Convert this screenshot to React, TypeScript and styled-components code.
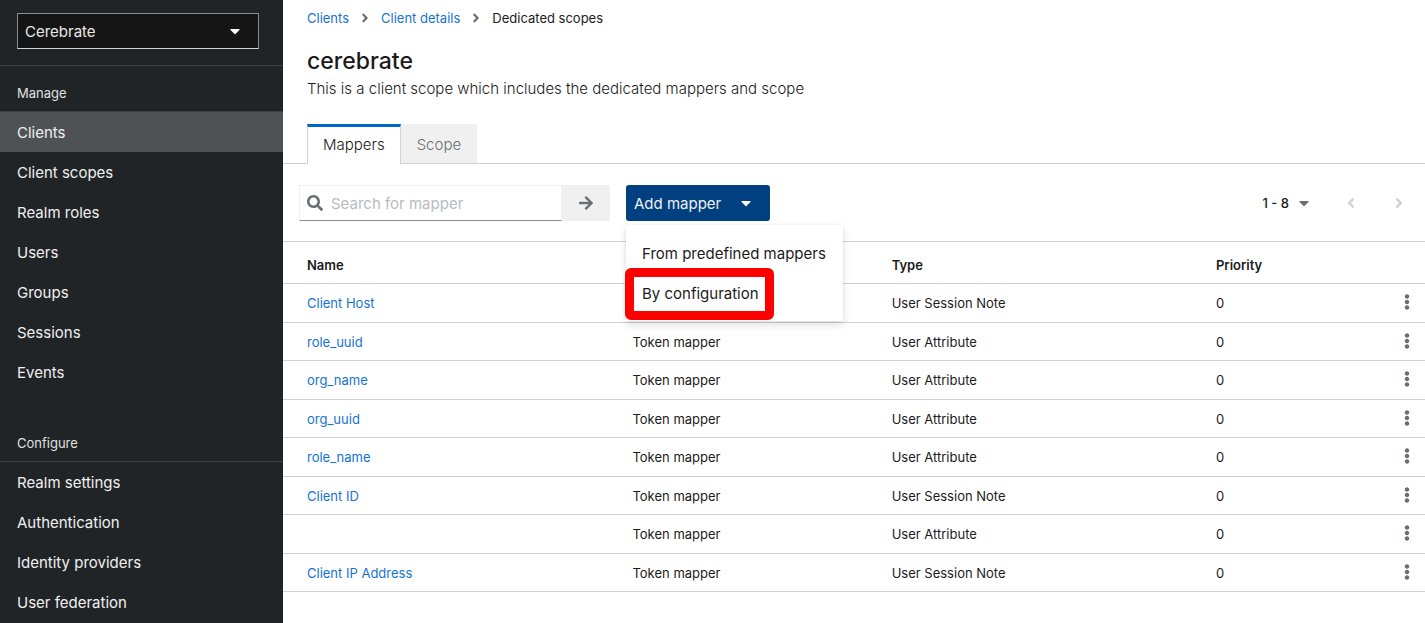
import React from 'react';
import styled, { createGlobalStyle, ThemeProvider } from 'styled-components';
import { FaAngleLeft, FaAngleRight, FaArrowRight, FaCaretDown, FaEllipsisV, FaSearch } from 'react-icons/fa';

const theme = {
  body: '15px',
  small: '13px',
  title: '23px',
  text: '#1b1b1b',
  link: '#1474d4',
  muted: '#6a6e73',
  line: '#d2d2d2',
  grey: '#f0f0f0',
  side: '#212427',
};

const GlobalStyle = createGlobalStyle`
  *, *::before, *::after { box-sizing: border-box; }
  body { margin: 0; background: #fff; }
  body, button, input, select { font-family: Inter, "Liberation Sans", sans-serif; font-weight: 400; }
  a { text-decoration: none; }
`;

const Page = styled.div`
  display: flex;
  min-height: 100vh;
  color: ${(p) => p.theme.text};
  font-size: ${(p) => p.theme.body};
  line-height: 24px;
`;

const Sidebar = styled.aside`
  flex: 0 0 283px;
  background: ${(p) => p.theme.side};
  color: #fff;
`;

const RealmBar = styled.div`
  padding: 13px 24px 16px 17px;
  border-bottom: 1px solid #3c3f42;
`;

const RealmPicker = styled.label`
  display: grid;
  align-items: center;
  > * { grid-area: 1 / 1; }
  > svg { justify-self: end; margin-right: 16px; pointer-events: none; }
`;

const RealmSelect = styled.select`
  appearance: none;
  width: 100%;
  height: 36px;
  padding: 0 7px;
  border: 1px solid #8a8d90;
  border-bottom-color: #d2d2d2;
  border-radius: 0;
  background: #151515;
  color: #e8e8e8;
  font-size: ${(p) => p.theme.body};
`;

const NavSection = styled.section`
  padding-top: 16px;
  & + & { padding-top: 40px; }
`;

const NavTitle = styled.h2`
  margin: 0;
  padding: 0 17px 6px;
  border-bottom: 1px solid #3c3f42;
  color: #e0e0e0;
  font-size: ${(p) => p.theme.small};
  font-weight: 400;
  line-height: 23px;
`;

const NavLink = styled.a<{ $active?: boolean }>`
  display: block;
  padding: 9px 17px 7px;
  background: ${(p) => (p.$active ? '#4f5255' : 'transparent')};
  color: #f0f0f0;
`;

const Main = styled.main`
  flex: 1;
  min-width: 0;
`;

const Header = styled.header`
  padding: 8px 24px 23px;
`;

const Breadcrumb = styled.nav`
  display: flex;
  align-items: center;
  gap: 9px;
  font-size: ${(p) => p.theme.small};
  line-height: 20px;
  > svg { color: ${(p) => p.theme.muted}; }
`;

const TextLink = styled.a`
  color: ${(p) => p.theme.link};
`;

const Title = styled.h1`
  margin: 17px 0 0;
  font-size: ${(p) => p.theme.title};
  font-weight: 500;
  line-height: 32px;
`;

const Description = styled.p`
  margin: 0;
  font-weight: 300;
`;

const Tabs = styled.div`
  display: flex;
  padding: 0 24px;
  box-shadow: inset 0 -1px ${(p) => p.theme.line};
`;

const Tab = styled.button<{ $active?: boolean }>`
  height: 40px;
  padding: ${(p) => (p.$active ? '0 15px 2px' : '1px 16px 0')};
  border: 0 solid ${(p) => p.theme.line};
  border-width: ${(p) => (p.$active ? '3px 1px 0' : '0 0 1px')};
  border-top-color: #06c;
  background: ${(p) => (p.$active ? '#fff' : p.theme.grey)};
  color: ${(p) => (p.$active ? p.theme.text : p.theme.muted)};
  font-size: ${(p) => p.theme.body};
  font-weight: 300;
`;

const Toolbar = styled.div`
  display: flex;
  align-items: center;
  gap: 16px;
  padding: 21px 16px 20px;
`;

const SearchForm = styled.form`
  display: flex;
  width: 311px;
  height: 36px;
`;

const SearchField = styled.label`
  display: flex;
  flex: 1;
  align-items: center;
  gap: 8px;
  min-width: 0;
  padding: 0 7px;
  border: 1px solid ${(p) => p.theme.grey};
  border-bottom-color: #8a8d90;
  color: ${(p) => p.theme.muted};
`;

const SearchInput = styled.input`
  flex: 1;
  min-width: 0;
  padding: 0;
  border: 0;
  outline: 0;
  background: transparent;
  font-size: ${(p) => p.theme.body};
  &::placeholder { color: #b8bbbe; }
`;

const SearchButton = styled.button`
  display: grid;
  place-items: center;
  width: 48px;
  padding: 0;
  border: 0;
  background: ${(p) => p.theme.grey};
  color: ${(p) => p.theme.muted};
  font-size: 16px;
`;

const Dropdown = styled.div`
  position: relative;
`;

const DropdownToggle = styled.button`
  display: flex;
  align-items: center;
  justify-content: space-between;
  width: 144px;
  height: 36px;
  padding: 0 16px 0 8px;
  border: 0;
  border-radius: 3px;
  background: #004080;
  color: #f0f0f0;
  font-size: ${(p) => p.theme.body};
`;

const Menu = styled.div`
  position: absolute;
  top: 100%;
  left: 0;
  z-index: 1;
  width: 217px;
  margin-top: 4px;
  padding: 8px 0;
  background: #fff;
  box-shadow: 0 4px 8px rgba(3, 3, 3, 0.12), 0 0 4px rgba(3, 3, 3, 0.06);
`;

const MenuItem = styled.button`
  position: relative;
  display: block;
  width: 100%;
  height: 40px;
  padding: 0 16px;
  border: 0;
  background: transparent;
  color: ${(p) => p.theme.text};
  font-size: ${(p) => p.theme.body};
  text-align: left;
  white-space: nowrap;
`;

const Highlight = styled.span`
  position: absolute;
  top: -5px;
  left: -1px;
  width: 149px;
  height: 52px;
  border: 9px solid #f00;
  border-radius: 6px;
`;

const Pagination = styled.div`
  display: flex;
  align-items: center;
  margin-left: auto;
`;

const PageRange = styled.button`
  display: flex;
  align-items: center;
  gap: 7px;
  padding: 0 15px 0 0;
  border: 0;
  background: transparent;
  color: ${(p) => p.theme.text};
  font-size: ${(p) => p.theme.small};
  font-weight: 500;
  > svg { color: ${(p) => p.theme.muted}; font-size: 16px; }
`;

const PageButton = styled.button`
  display: grid;
  place-items: center;
  width: 48px;
  height: 36px;
  padding: 0;
  border: 0;
  background: transparent;
  color: ${(p) => p.theme.line};
  font-size: 16px;
  &:last-child { margin-right: -14px; }
`;

const Table = styled.table`
  width: 100%;
  border-collapse: separate;
  border-spacing: 0;
  border-top: 1px solid ${(p) => p.theme.line};
  table-layout: fixed;
  font-size: ${(p) => p.theme.small};
  line-height: 20px;
  text-align: left;
`;

const Col = styled.col<{ $width: string }>`
  width: ${(p) => p.$width};
`;

const HeadCell = styled.th`
  height: 42px;
  padding: 5px 8px 0;
  border-bottom: 1px solid ${(p) => p.theme.line};
  font-weight: 600;
  &:first-child { padding-left: 24px; }
`;

const Cell = styled.td`
  padding: 0 8px;
  border-bottom: 1px solid ${(p) => p.theme.line};
  &:first-child { padding-left: 24px; }
  &:last-child { padding: 0 10px 2px 0; }
`;

const Row = styled.tr`
  height: 38px;
  &:nth-child(odd) { height: 39px; }
`;

const KebabButton = styled.button`
  display: block;
  margin-left: auto;
  padding: 0;
  border: 0;
  background: transparent;
  color: ${(p) => p.theme.muted};
  font-size: 16px;
  line-height: 16px;
  > svg { display: block; }
`;

const manage = ['Clients', 'Client scopes', 'Realm roles', 'Users', 'Groups', 'Sessions', 'Events'];
const configure = ['Realm settings', 'Authentication', 'Identity providers', 'User federation'];

const mappers = [
  { name: 'Client Host', category: '', type: 'User Session Note' },
  { name: 'role_uuid', category: 'Token mapper', type: 'User Attribute' },
  { name: 'org_name', category: 'Token mapper', type: 'User Attribute' },
  { name: 'org_uuid', category: 'Token mapper', type: 'User Attribute' },
  { name: 'role_name', category: 'Token mapper', type: 'User Attribute' },
  { name: 'Client ID', category: 'Token mapper', type: 'User Session Note' },
  { name: '', category: 'Token mapper', type: 'User Attribute' },
  { name: 'Client IP Address', category: 'Token mapper', type: 'User Session Note' },
];

export default function App() {
  return (
    <ThemeProvider theme={theme}>
      <GlobalStyle />
      <Page>
        <Sidebar>
          <RealmBar>
            <RealmPicker>
              <RealmSelect aria-label="Realm" defaultValue="Cerebrate">
                <option>Cerebrate</option>
              </RealmSelect>
              <FaCaretDown size={16} />
            </RealmPicker>
          </RealmBar>
          <nav>
            <NavSection>
              <NavTitle>Manage</NavTitle>
              {manage.map((item) => (
                <NavLink key={item} href="#" $active={item === 'Clients'}>{item}</NavLink>
              ))}
            </NavSection>
            <NavSection>
              <NavTitle>Configure</NavTitle>
              {configure.map((item) => (
                <NavLink key={item} href="#">{item}</NavLink>
              ))}
            </NavSection>
          </nav>
        </Sidebar>
        <Main>
          <Header>
            <Breadcrumb aria-label="Breadcrumb">
              <TextLink href="#">Clients</TextLink>
              <FaAngleRight size={14} />
              <TextLink href="#">Client details</TextLink>
              <FaAngleRight size={14} />
              <span>Dedicated scopes</span>
            </Breadcrumb>
            <Title>cerebrate</Title>
            <Description>This is a client scope which includes the dedicated mappers and scope</Description>
          </Header>
          <Tabs role="tablist">
            <Tab role="tab" aria-selected="true" $active>Mappers</Tab>
            <Tab role="tab" aria-selected="false">Scope</Tab>
          </Tabs>
          <Toolbar>
            <SearchForm onSubmit={(e) => e.preventDefault()}>
              <SearchField>
                <FaSearch size={16} />
                <SearchInput aria-label="Search for mapper" placeholder="Search for mapper" />
              </SearchField>
              <SearchButton type="submit" aria-label="Search"><FaArrowRight /></SearchButton>
            </SearchForm>
            <Dropdown>
              <DropdownToggle aria-expanded="true">
                Add mapper
                <FaCaretDown size={16} color="#fff" />
              </DropdownToggle>
              <Menu role="menu">
                <MenuItem role="menuitem">From predefined mappers</MenuItem>
                <MenuItem role="menuitem">
                  By configuration
                  <Highlight />
                </MenuItem>
              </Menu>
            </Dropdown>
            <Pagination>
              <PageRange aria-label="Items per page">
                1 - 8
                <FaCaretDown />
              </PageRange>
              <PageButton aria-label="Previous page"><FaAngleLeft /></PageButton>
              <PageButton aria-label="Next page"><FaAngleRight /></PageButton>
            </Pagination>
          </Toolbar>
          <Table>
            <colgroup>
              <Col $width="29.9%" />
              <Col $width="22.7%" />
              <Col $width="28.4%" />
              <Col $width="14%" />
              <Col $width="5%" />
            </colgroup>
            <thead>
              <tr>
                <HeadCell>Name</HeadCell>
                <HeadCell aria-label="Category" />
                <HeadCell>Type</HeadCell>
                <HeadCell>Priority</HeadCell>
                <HeadCell aria-label="Actions" />
              </tr>
            </thead>
            <tbody>
              {mappers.map((mapper, i) => (
                <Row key={i}>
                  <Cell>{mapper.name && <TextLink href="#">{mapper.name}</TextLink>}</Cell>
                  <Cell>{mapper.category}</Cell>
                  <Cell>{mapper.type}</Cell>
                  <Cell>0</Cell>
                  <Cell>
                    <KebabButton aria-label="Mapper actions"><FaEllipsisV /></KebabButton>
                  </Cell>
                </Row>
              ))}
            </tbody>
          </Table>
        </Main>
      </Page>
    </ThemeProvider>
  );
}
